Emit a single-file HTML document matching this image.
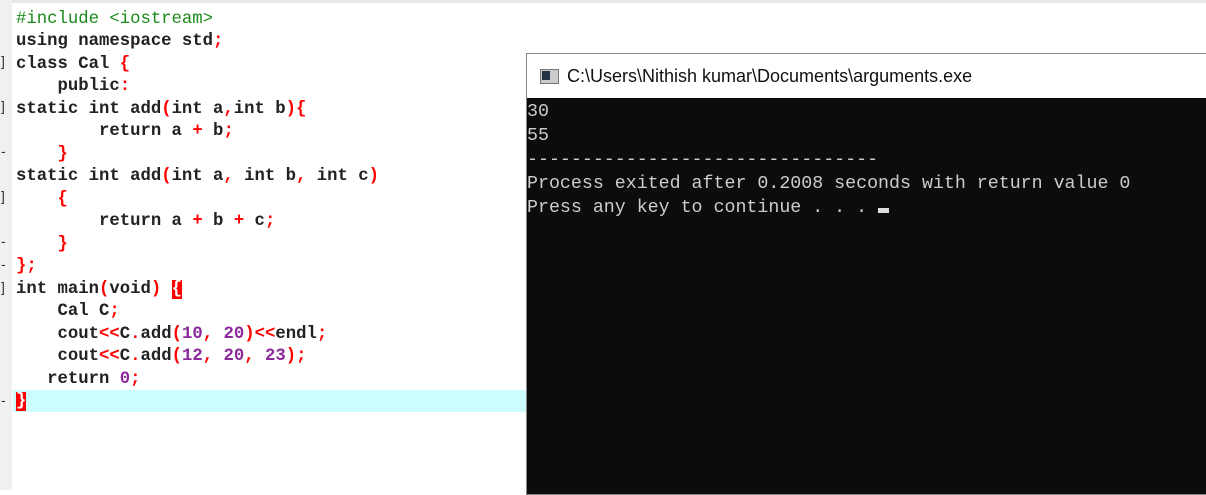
<!DOCTYPE html>
<html><head><style>
body{margin:0;width:1206px;height:490px;overflow:hidden;background:#fff;position:relative;font-family:"Liberation Mono",monospace}
.gut{position:absolute;left:0;top:0;width:12px;height:490px;background:#f0f0f0}
.top{position:absolute;left:0;top:0;width:1206px;height:3px;background:#e8e8e8}
.hl{position:absolute;left:13px;top:390px;width:513px;height:22px;background:#ccfcfc}
.code{position:absolute;left:16px;top:9px;font-size:17.3px;line-height:22.47px;font-weight:bold;color:#222;white-space:pre}
.r{color:#f00}.g{color:#1a8a1a;font-weight:normal}.p{color:#8a2a9a}
.rb{background:#f00;color:#fff}
.m{position:absolute;left:1px;font:14px "Liberation Sans",sans-serif;color:#333}
.win{position:absolute;left:526px;top:53px;width:690px;height:440px;border:1px solid #888;background:#0c0c0c}
.tb{height:44px;background:#fff;position:relative}
.tt{position:absolute;left:40px;top:12px;font:18px "Liberation Sans","DejaVu Sans",sans-serif;color:#111;letter-spacing:0px}
.ic{position:absolute;left:13px;top:15px;width:17px;height:13px;border:1px solid #777;background:#ccc}
.ic:before{content:"";position:absolute;left:1px;top:1px;width:8px;height:9px;background:#234}
.con{position:absolute;left:0;top:46px;color:#ccc;font-size:18.3px;line-height:24px;white-space:pre}
.cur{display:inline-block;width:11px;height:5px;background:#ddd;vertical-align:-1px}
</style></head><body>
<div class="top"></div>
<div class="gut"></div>
<div class="hl"></div>
<div class="m" style="top:53px">]</div>
<div class="m" style="top:98px">]</div>
<div class="m" style="top:143px">-</div>
<div class="m" style="top:188px">]</div>
<div class="m" style="top:233px">-</div>
<div class="m" style="top:256px">-</div>
<div class="m" style="top:279px">]</div>
<div class="m" style="top:392px">-</div>
<div class="code"><span class="g">#include &lt;iostream&gt;</span>
using namespace std<span class="r">;</span>
class Cal <span class="r">{</span>
    public<span class="r">:</span>
static int add<span class="r">(</span>int a<span class="r">,</span>int b<span class="r">){</span>
        return a <span class="r">+</span> b<span class="r">;</span>
    <span class="r">}</span>
static int add<span class="r">(</span>int a<span class="r">,</span> int b<span class="r">,</span> int c<span class="r">)</span>
    <span class="r">{</span>
        return a <span class="r">+</span> b <span class="r">+</span> c<span class="r">;</span>
    <span class="r">}</span>
<span class="r">};</span>
int main<span class="r">(</span>void<span class="r">)</span> <span class="rb">{</span>
    Cal C<span class="r">;</span>
    cout<span class="r">&lt;&lt;</span>C<span class="r">.</span>add<span class="r">(</span><span class="p">10</span><span class="r">,</span> <span class="p">20</span><span class="r">)&lt;&lt;</span>endl<span class="r">;</span>
    cout<span class="r">&lt;&lt;</span>C<span class="r">.</span>add<span class="r">(</span><span class="p">12</span><span class="r">,</span> <span class="p">20</span><span class="r">,</span> <span class="p">23</span><span class="r">);</span>
   return <span class="p">0</span><span class="r">;</span>
<span class="rb">}</span></div>
<div class="win">
<div class="tb"><div class="ic"></div><div class="tt">C:\Users\Nithish kumar\Documents\arguments.exe</div></div>
<div class="con">30
55
--------------------------------
Process exited after 0.2008 seconds with return value 0
Press any key to continue . . . <span class="cur"></span></div>
</div>
</body></html>
